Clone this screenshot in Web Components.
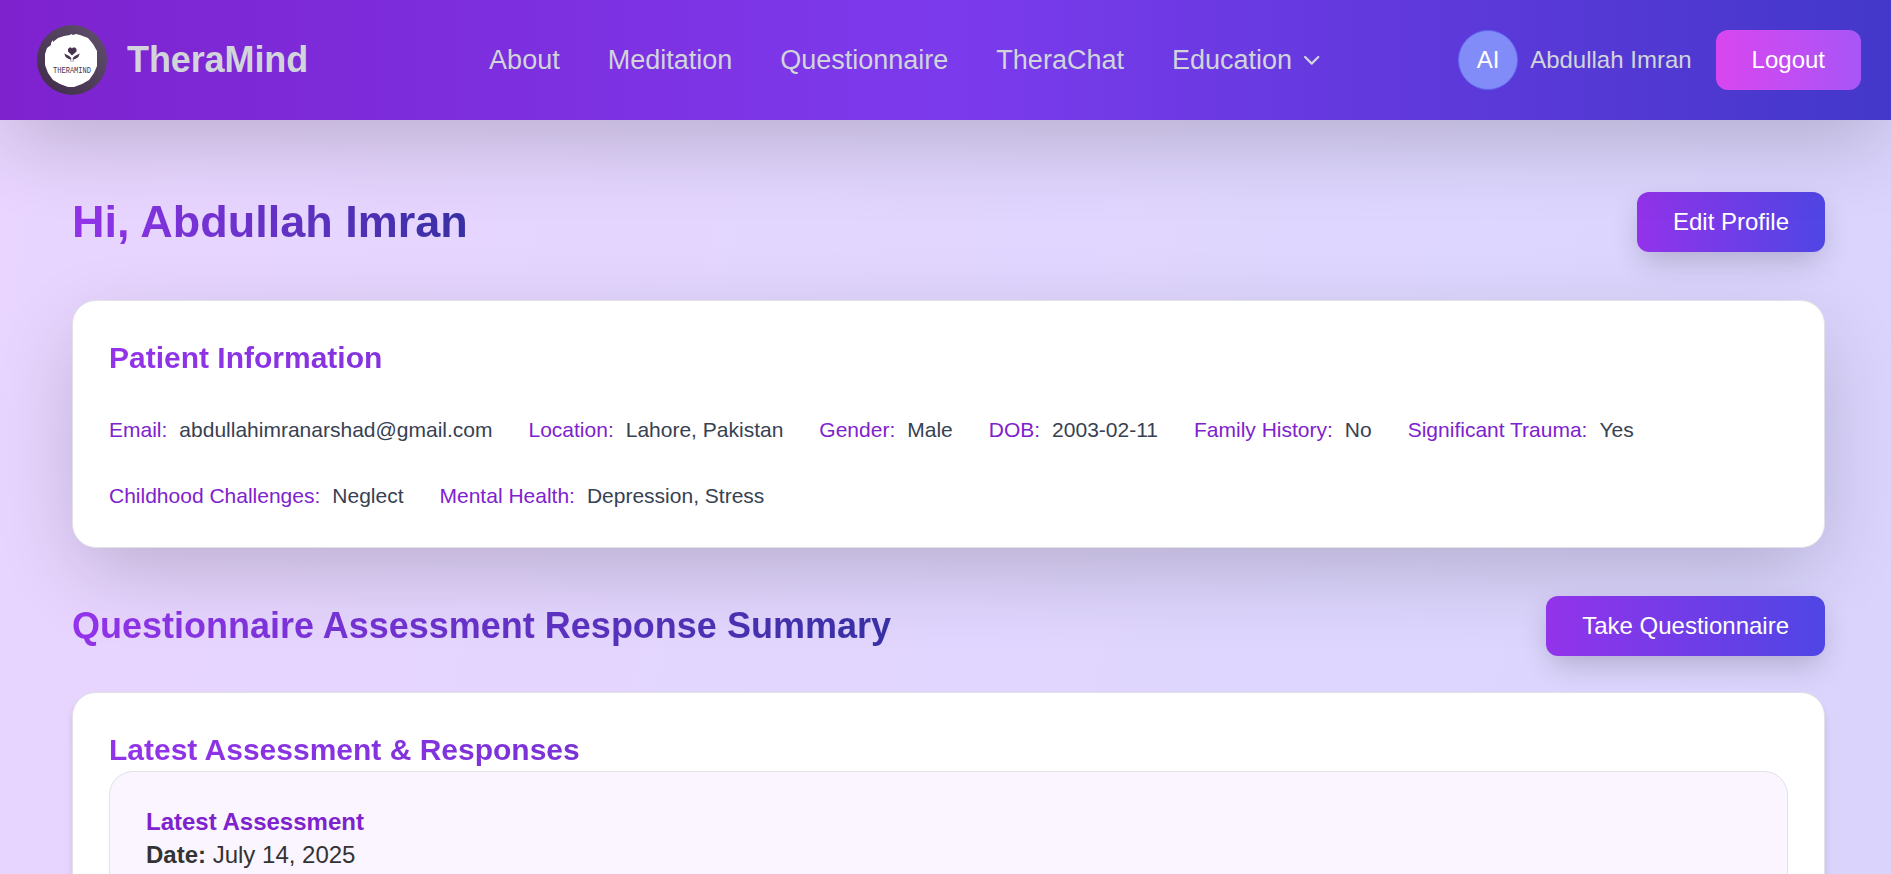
<!DOCTYPE html>
<html lang="en">
<head>
<meta charset="utf-8">
<title>TheraMind</title>
<style>
html,body{margin:0;height:874px;overflow:hidden}
body{font-family:"Liberation Sans",Arial,sans-serif;font-size:24px;line-height:36px;color:#333}
</style>
</head>
<body>
<tm-app></tm-app>
<script>
const define = (name, html) => customElements.define(name, class extends HTMLElement {
  constructor() {
    super();
    this.attachShadow({ mode: 'open' }).innerHTML = html;
  }
});

define('tm-logo', `
<style>
:host{display:flex;align-items:center;gap:20px;flex:none}
svg{display:block;width:70px;height:70px;overflow:visible}
b{font-size:36px;line-height:48px;color:#d1d5db;letter-spacing:-.1px}
</style>
<svg viewBox="0 0 70 70">
  <defs><linearGradient id="g" x1="0" y1="1" x2="1" y2="0"><stop offset="0" stop-color="#3e2a48"/><stop offset="1" stop-color="#62526e"/></linearGradient></defs>
  <circle cx="35" cy="35" r="35" fill="url(#g)"/>
  <path fill="#fff" d="M14 20v-2l2-3v2l5-4 6-2 6-1 1-1 2 1 3-1 4 1 8 3 5 6 4 7 0 6v9l-3 7-5 7-7 4-8 3h-6l-8-3-7-4-5-7-3-8v-11l2-6z"/>
  <g fill="#46324f">
    <path d="M35 30.500l-4-4v-2.500l1.500-1.500h1.500l1 1 1-1h2l1.500 1.500v2.500z"/>
    <path d="M34.200 37v-4l-2-2-5-2.500 1.500 3.500 3 2 2 .5v2.500zM35.800 37v-4l2-2 5-2.500-1.500 3.500-3 2-2 .5v2.500z"/>
  </g>
  <text x="16" y="48" textLength="38" lengthAdjust="spacingAndGlyphs" font-family="Liberation Mono,monospace" font-size="9.500" fill="#46324f">THERAMIND</text>
</svg>
<b><slot></slot></b>`);

define('tm-link', `
<style>:host{display:flex;align-items:center;gap:12px;font-size:27px;line-height:42px;color:#d1d5db;white-space:nowrap}</style>
<slot></slot>`);

define('tm-button', `
<style>
:host{display:block;flex:none;box-sizing:border-box;height:60px;padding:12px 36px;border-radius:12px;color:#fff;white-space:nowrap;
background:linear-gradient(to right,#9333ea,#4f46e5);box-shadow:0 12px 30px -4px rgba(0,0,0,.2)}
:host([kind=logout]){background:linear-gradient(to right,#d946ef,#a855f7);box-shadow:none}
</style><slot></slot>`);

define('tm-user', `
<style>
:host{display:flex;align-items:center;gap:12px;color:#d1d5db;white-space:nowrap}
i{font-style:normal;box-sizing:border-box;width:60px;height:60px;border-radius:50%;border:1px solid #6366f1;background:#818cf8;color:#fff;display:grid;place-items:center}
</style><i>AI</i><span><slot></slot></span>`);

define('tm-header', `
<style>
:host{display:flex;align-items:center;box-sizing:border-box;height:120px;padding:0 30px 0 37px;position:relative;
background:linear-gradient(to right,#7e22ce,#7c3aed,#4338ca);box-shadow:0 27px 84px -8px rgba(0,0,0,.2)}
nav{display:flex;gap:48px;margin-left:181px}
svg{width:18px;height:18px}
.end{display:flex;align-items:center;gap:24px;margin-left:auto}
</style>
<tm-logo>TheraMind</tm-logo>
<nav><tm-link>About</tm-link><tm-link>Meditation</tm-link><tm-link>Questionnaire</tm-link><tm-link>TheraChat</tm-link>
<tm-link>Education<svg viewBox="0 0 18 18" fill="none" stroke="#d1d5db" stroke-width="2.200" stroke-linecap="round" stroke-linejoin="round"><path d="M1.100 6l6.600 6.600L14.300 6"/></svg></tm-link></nav>
<div class="end"><tm-user>Abdullah Imran</tm-user><tm-button kind="logout">Logout</tm-button></div>`);

define('tm-title', `
<style>
:host{display:block;font-weight:700;font-size:30px;line-height:42px;color:transparent;
background:linear-gradient(to right,#9333ea,#3730a3);-webkit-background-clip:text;background-clip:text}
:host([size=xl]){font-size:45px;line-height:54px}
:host([size=lg]){font-size:36px;line-height:48px}
</style><slot></slot>`);

define('tm-bar', `
<style>:host{display:flex;align-items:center;justify-content:space-between;height:60px}</style><slot></slot>`);

define('tm-field', `
<style>:host{display:flex;gap:12px;font-size:21px;line-height:30px;white-space:nowrap;color:#374151}
span{color:#7e22ce}</style><span><slot name="label"></slot></span><slot></slot>`);

define('tm-card', `
<style>
:host{display:block;box-sizing:border-box;padding:36px;border:1px solid #e0e2e7;border-radius:24px;background:#fff}
:host([elevated]){box-shadow:0 27px 84px -8px rgba(0,0,0,.2)}
:host([raised]){box-shadow:0 6px 9px -1.500px rgba(0,0,0,.1),0 3px 6px -3px rgba(0,0,0,.1)}
:host([tinted]){background:#faf5ff}
</style><slot></slot>`);

define('tm-app', `
<style>
:host{display:block;height:874px;overflow:hidden;background:linear-gradient(100deg,#e9d5ff,#ddd6fe 75%,#dad4fd)}
main{padding:72px 66px 0 72px}
tm-bar{margin-bottom:48px}
.fields{display:flex;flex-wrap:wrap;gap:36px;margin-top:36px}
.info{margin-bottom:48px}
tm-bar.second{margin-bottom:36px}
h4{margin:0;font-size:24px;line-height:28px;color:#7e22ce}
p{margin:1px 0 0}
</style>
<tm-header></tm-header>
<main>
<tm-bar><tm-title size="xl">Hi, Abdullah Imran</tm-title><tm-button>Edit Profile</tm-button></tm-bar>
<tm-card class="info" elevated>
<tm-title>Patient Information</tm-title>
<div class="fields">
<tm-field><span slot="label">Email:</span>abdullahimranarshad@gmail.com</tm-field>
<tm-field><span slot="label">Location:</span>Lahore, Pakistan</tm-field>
<tm-field><span slot="label">Gender:</span>Male</tm-field>
<tm-field><span slot="label">DOB:</span>2003-02-11</tm-field>
<tm-field><span slot="label">Family History:</span>No</tm-field>
<tm-field><span slot="label">Significant Trauma:</span>Yes</tm-field>
<tm-field><span slot="label">Childhood Challenges:</span>Neglect</tm-field>
<tm-field><span slot="label">Mental Health:</span>Depression, Stress</tm-field>
</div>
</tm-card>
<tm-bar class="second"><tm-title size="lg">Questionnaire Assessment Response Summary</tm-title><tm-button>Take Questionnaire</tm-button></tm-bar>
<tm-card raised>
<tm-title>Latest Assessment &amp; Responses</tm-title>
<tm-card tinted><h4>Latest Assessment</h4><p><b>Date:</b> July 14, 2025</p></tm-card>
</tm-card>
</main>`);
</script>
</body>
</html>
